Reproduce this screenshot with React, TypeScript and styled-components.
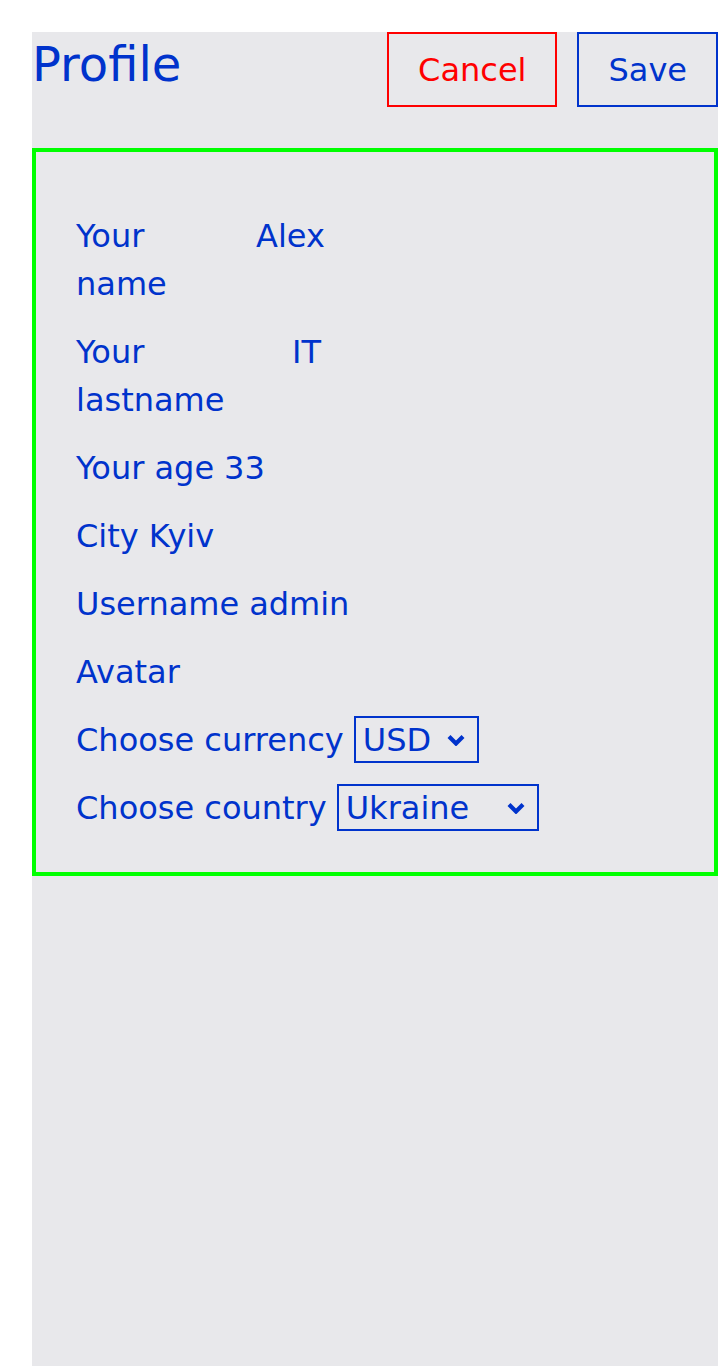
import React from "react";
import styled, { createGlobalStyle } from "styled-components";

const GlobalStyle = createGlobalStyle`
  html, body {
    margin: 0;
    padding: 0;
    background: #ffffff;
  }
  body {
    font-family: "DejaVu Sans", Verdana, sans-serif;
  }
  * { box-sizing: border-box; }
`;

const BLUE = "#0033cc";

const Page = styled.div`
  padding: 32px 0 0 32px;
`;

const Container = styled.main`
  min-height: calc(100vh - 32px);
  background: #e8e8eb;
  color: ${BLUE};
  font-family: "DejaVu Sans", Verdana, sans-serif;
`;

const Header = styled.header`
  display: flex;
  justify-content: space-between;
  align-items: flex-start;
  margin-bottom: 41px;
`;

const Title = styled.h1`
  margin: 0;
  font-size: 48px;
  font-weight: normal;
  line-height: 65px;
`;

const Actions = styled.div`
  display: flex;
  gap: 20px;
`;

const ActionButton = styled.button<{ $tone: "danger" | "primary" }>`
  height: 75px;
  padding: 0 29px;
  background: transparent;
  border: 2px solid ${(p) => (p.$tone === "danger" ? "#ff0000" : BLUE)};
  color: ${(p) => (p.$tone === "danger" ? "#ff0000" : BLUE)};
  font-family: "DejaVu Sans", Verdana, sans-serif;
  font-size: 32px;
  line-height: 1;
  cursor: pointer;
`;

const Card = styled.section`
  border: 4px solid #00ff00;
  padding: 60px 40px 40px;
  display: flex;
  flex-direction: column;
  gap: 20px;
`;

const Row = styled.div`
  display: flex;
  align-items: flex-start;
  gap: 10px;
  font-size: 32px;
  line-height: 48px;
`;

const PairRow = styled.div<{ $labelWidth: number }>`
  display: grid;
  grid-template-columns: ${(p) => p.$labelWidth}px auto;
  font-size: 32px;
  line-height: 48px;
`;

const WrappedLabel = styled.span`
  width: min-content;
`;

const Value = styled.span``;

const SelectWrap = styled.span`
  position: relative;
  display: inline-flex;
`;

const Select = styled.select<{ $width: number }>`
  appearance: none;
  -webkit-appearance: none;
  width: ${(p) => p.$width}px;
  height: 47px;
  padding: 0 0 0 7px;
  margin: 0;
  border: 2px solid ${BLUE};
  border-radius: 0;
  background: transparent;
  color: ${BLUE};
  font-family: "DejaVu Sans", Verdana, sans-serif;
  font-size: 32px;
  outline: none;
`;

const Chevron = styled.svg`
  position: absolute;
  right: 14px;
  top: 50%;
  width: 18px;
  height: 12px;
  transform: translateY(-50%);
  pointer-events: none;
`;

function Dropdown({ width, value, options }: { width: number; value: string; options: string[] }) {
  return (
    <SelectWrap>
      <Select $width={width} defaultValue={value}>
        {options.map((o) => (
          <option key={o} value={o}>
            {o}
          </option>
        ))}
      </Select>
      <Chevron viewBox="0 0 18 12">
        <polyline points="2,2.5 9,9.5 16,2.5" fill="none" stroke={BLUE} strokeWidth="4.2" />
      </Chevron>
    </SelectWrap>
  );
}

export default function App() {
  return (
    <>
      <GlobalStyle />
      <Page>
        <Container>
          <Header>
            <Title>Profile</Title>
            <Actions>
              <ActionButton $tone="danger">Cancel</ActionButton>
              <ActionButton $tone="primary">Save</ActionButton>
            </Actions>
          </Header>
          <Card>
            <PairRow $labelWidth={180}>
              <WrappedLabel>Your name</WrappedLabel>
              <Value>Alex</Value>
            </PairRow>
            <PairRow $labelWidth={216}>
              <WrappedLabel>Your lastname</WrappedLabel>
              <Value>IT</Value>
            </PairRow>
            <Row>
              <span>Your age</span>
              <Value>33</Value>
            </Row>
            <Row>
              <span>City</span>
              <Value>Kyiv</Value>
            </Row>
            <Row>
              <span>Username</span>
              <Value>admin</Value>
            </Row>
            <Row>
              <span>Avatar</span>
            </Row>
            <Row>
              <span>Choose currency</span>
              <Dropdown width={125} value="USD" options={["USD", "EUR", "UAH"]} />
            </Row>
            <Row>
              <span>Choose country</span>
              <Dropdown width={202} value="Ukraine" options={["Ukraine", "Poland", "Germany"]} />
            </Row>
          </Card>
        </Container>
      </Page>
    </>
  );
}
